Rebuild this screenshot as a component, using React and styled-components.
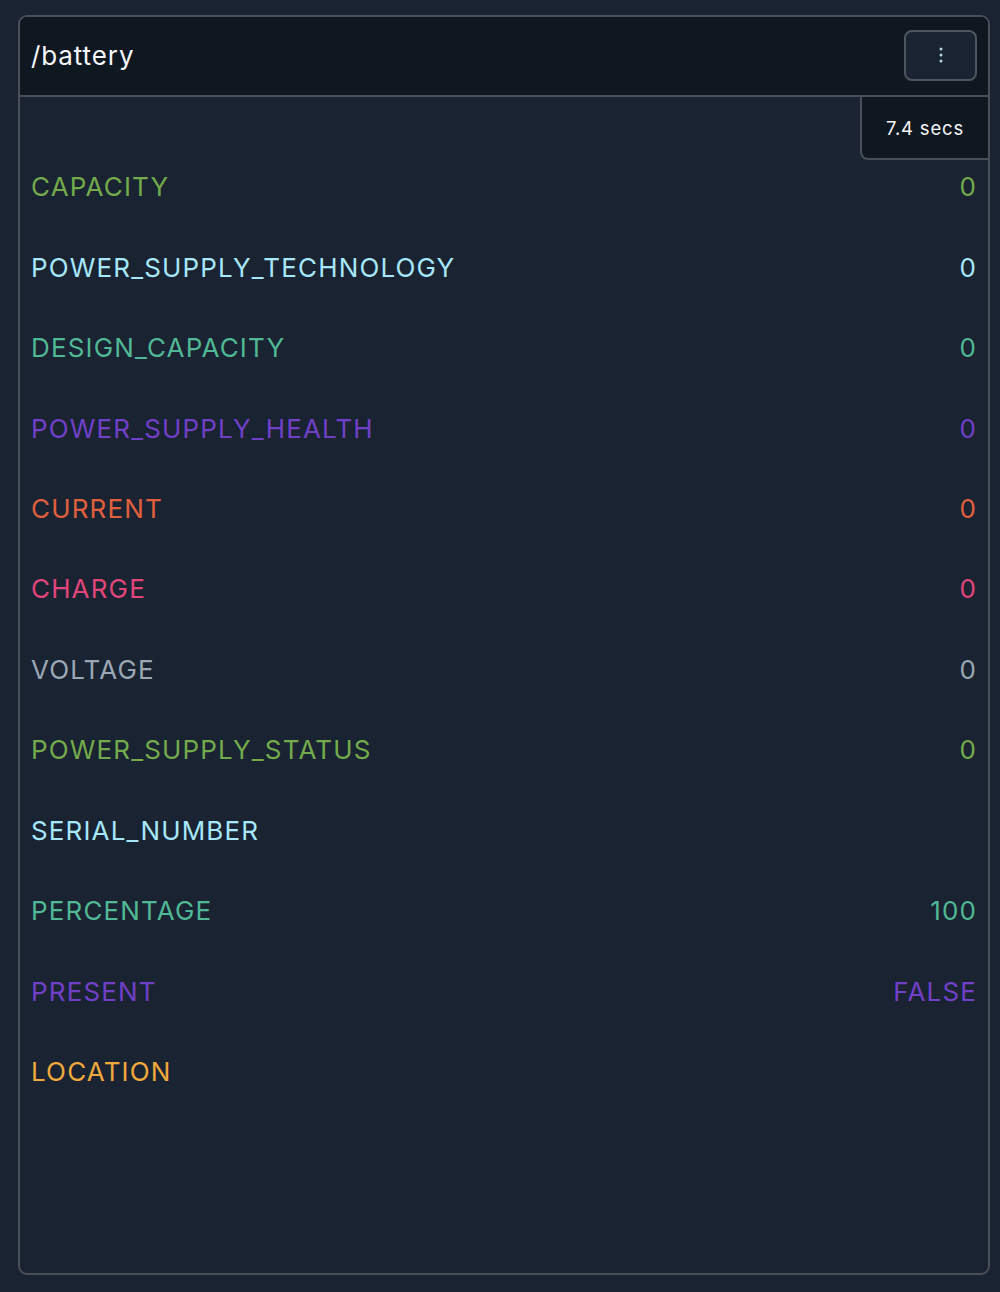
import React from "react"
import styled, { createGlobalStyle } from "styled-components"

const rows = [
  { name: "CAPACITY", value: "0", color: "#73ab4c" },
  { name: "POWER_SUPPLY_TECHNOLOGY", value: "0", color: "#a6e7fa" },
  { name: "DESIGN_CAPACITY", value: "0", color: "#50b894" },
  { name: "POWER_SUPPLY_HEALTH", value: "0", color: "#7040c8" },
  { name: "CURRENT", value: "0", color: "#e0603e" },
  { name: "CHARGE", value: "0", color: "#e0457b" },
  { name: "VOLTAGE", value: "0", color: "#9aa8b4" },
  { name: "POWER_SUPPLY_STATUS", value: "0", color: "#73ab4c" },
  { name: "SERIAL_NUMBER", value: "", color: "#a6e7fa" },
  { name: "PERCENTAGE", value: "100", color: "#50b894" },
  { name: "PRESENT", value: "FALSE", color: "#7040c8" },
  { name: "LOCATION", value: "", color: "#f0a93c" },
]

const GlobalStyle = createGlobalStyle`
  html, body {
    margin: 0;
    background: #1a2332;
  }
  body {
    font-family: Inter, "Noto Sans", sans-serif;
    padding: 15px 10px 0 18px;
  }
`

const App = () => (
  <>
    <GlobalStyle />
    <Card>
      <Header>
        <Title>/battery</Title>
        <MenuButton aria-label="menu">
          <svg width="4" height="16" viewBox="0 0 4 16">
            <circle cx="2" cy="2" r="1.5" fill="#b4d4d6" />
            <circle cx="2" cy="8" r="1.5" fill="#b4d4d6" />
            <circle cx="2" cy="14" r="1.5" fill="#b4d4d6" />
          </svg>
        </MenuButton>
      </Header>
      <Body>
        <Stamp>7.4 secs</Stamp>
        {rows.map((r) => (
          <Row key={r.name} color={r.color}>
            <span>{r.name}</span>
            <span>{r.value}</span>
          </Row>
        ))}
      </Body>
    </Card>
  </>
)

const Card = styled.div`
  box-sizing: border-box;
  width: 972px;
  height: 1260px;
  border: 2px solid #4a4f57;
  border-radius: 9px;
  overflow: hidden;
  display: flex;
  flex-direction: column;
`

const Header = styled.div`
  box-sizing: border-box;
  height: 80px;
  flex-shrink: 0;
  display: flex;
  align-items: center;
  justify-content: space-between;
  padding: 0 11px 0 11px;
  background: #0f1720;
  border-bottom: 2px solid #4a4f57;
`

const Title = styled.div`
  color: #f4f6f8;
  font-size: 26px;
  letter-spacing: 0.9px;
  margin-top: -2px;
`

const MenuButton = styled.button`
  box-sizing: border-box;
  width: 73px;
  height: 51px;
  border: 2px solid #4f555d;
  border-radius: 8px;
  background: #1a2332;
  display: flex;
  align-items: center;
  justify-content: center;
  padding: 0;
  margin-top: -2px;
`

const Body = styled.div`
  position: relative;
  flex: 1;
  padding: 49.5px 11px 0 11px;
`

const Stamp = styled.div`
  position: absolute;
  top: 0;
  right: 0;
  box-sizing: border-box;
  width: 128px;
  height: 63px;
  background: #0f1720;
  border-left: 2px solid #4a4f57;
  border-bottom: 2px solid #4a4f57;
  border-bottom-left-radius: 8px;
  display: flex;
  align-items: center;
  justify-content: center;
  color: #f4f6f8;
  font-size: 18.5px;
  letter-spacing: 0.8px;
`

const Row = styled.div`
  height: 80.45px;
  display: flex;
  align-items: center;
  justify-content: space-between;
  color: ${(p) => p.color};
  font-size: 26px;
  letter-spacing: 1.15px;
`

export default App
